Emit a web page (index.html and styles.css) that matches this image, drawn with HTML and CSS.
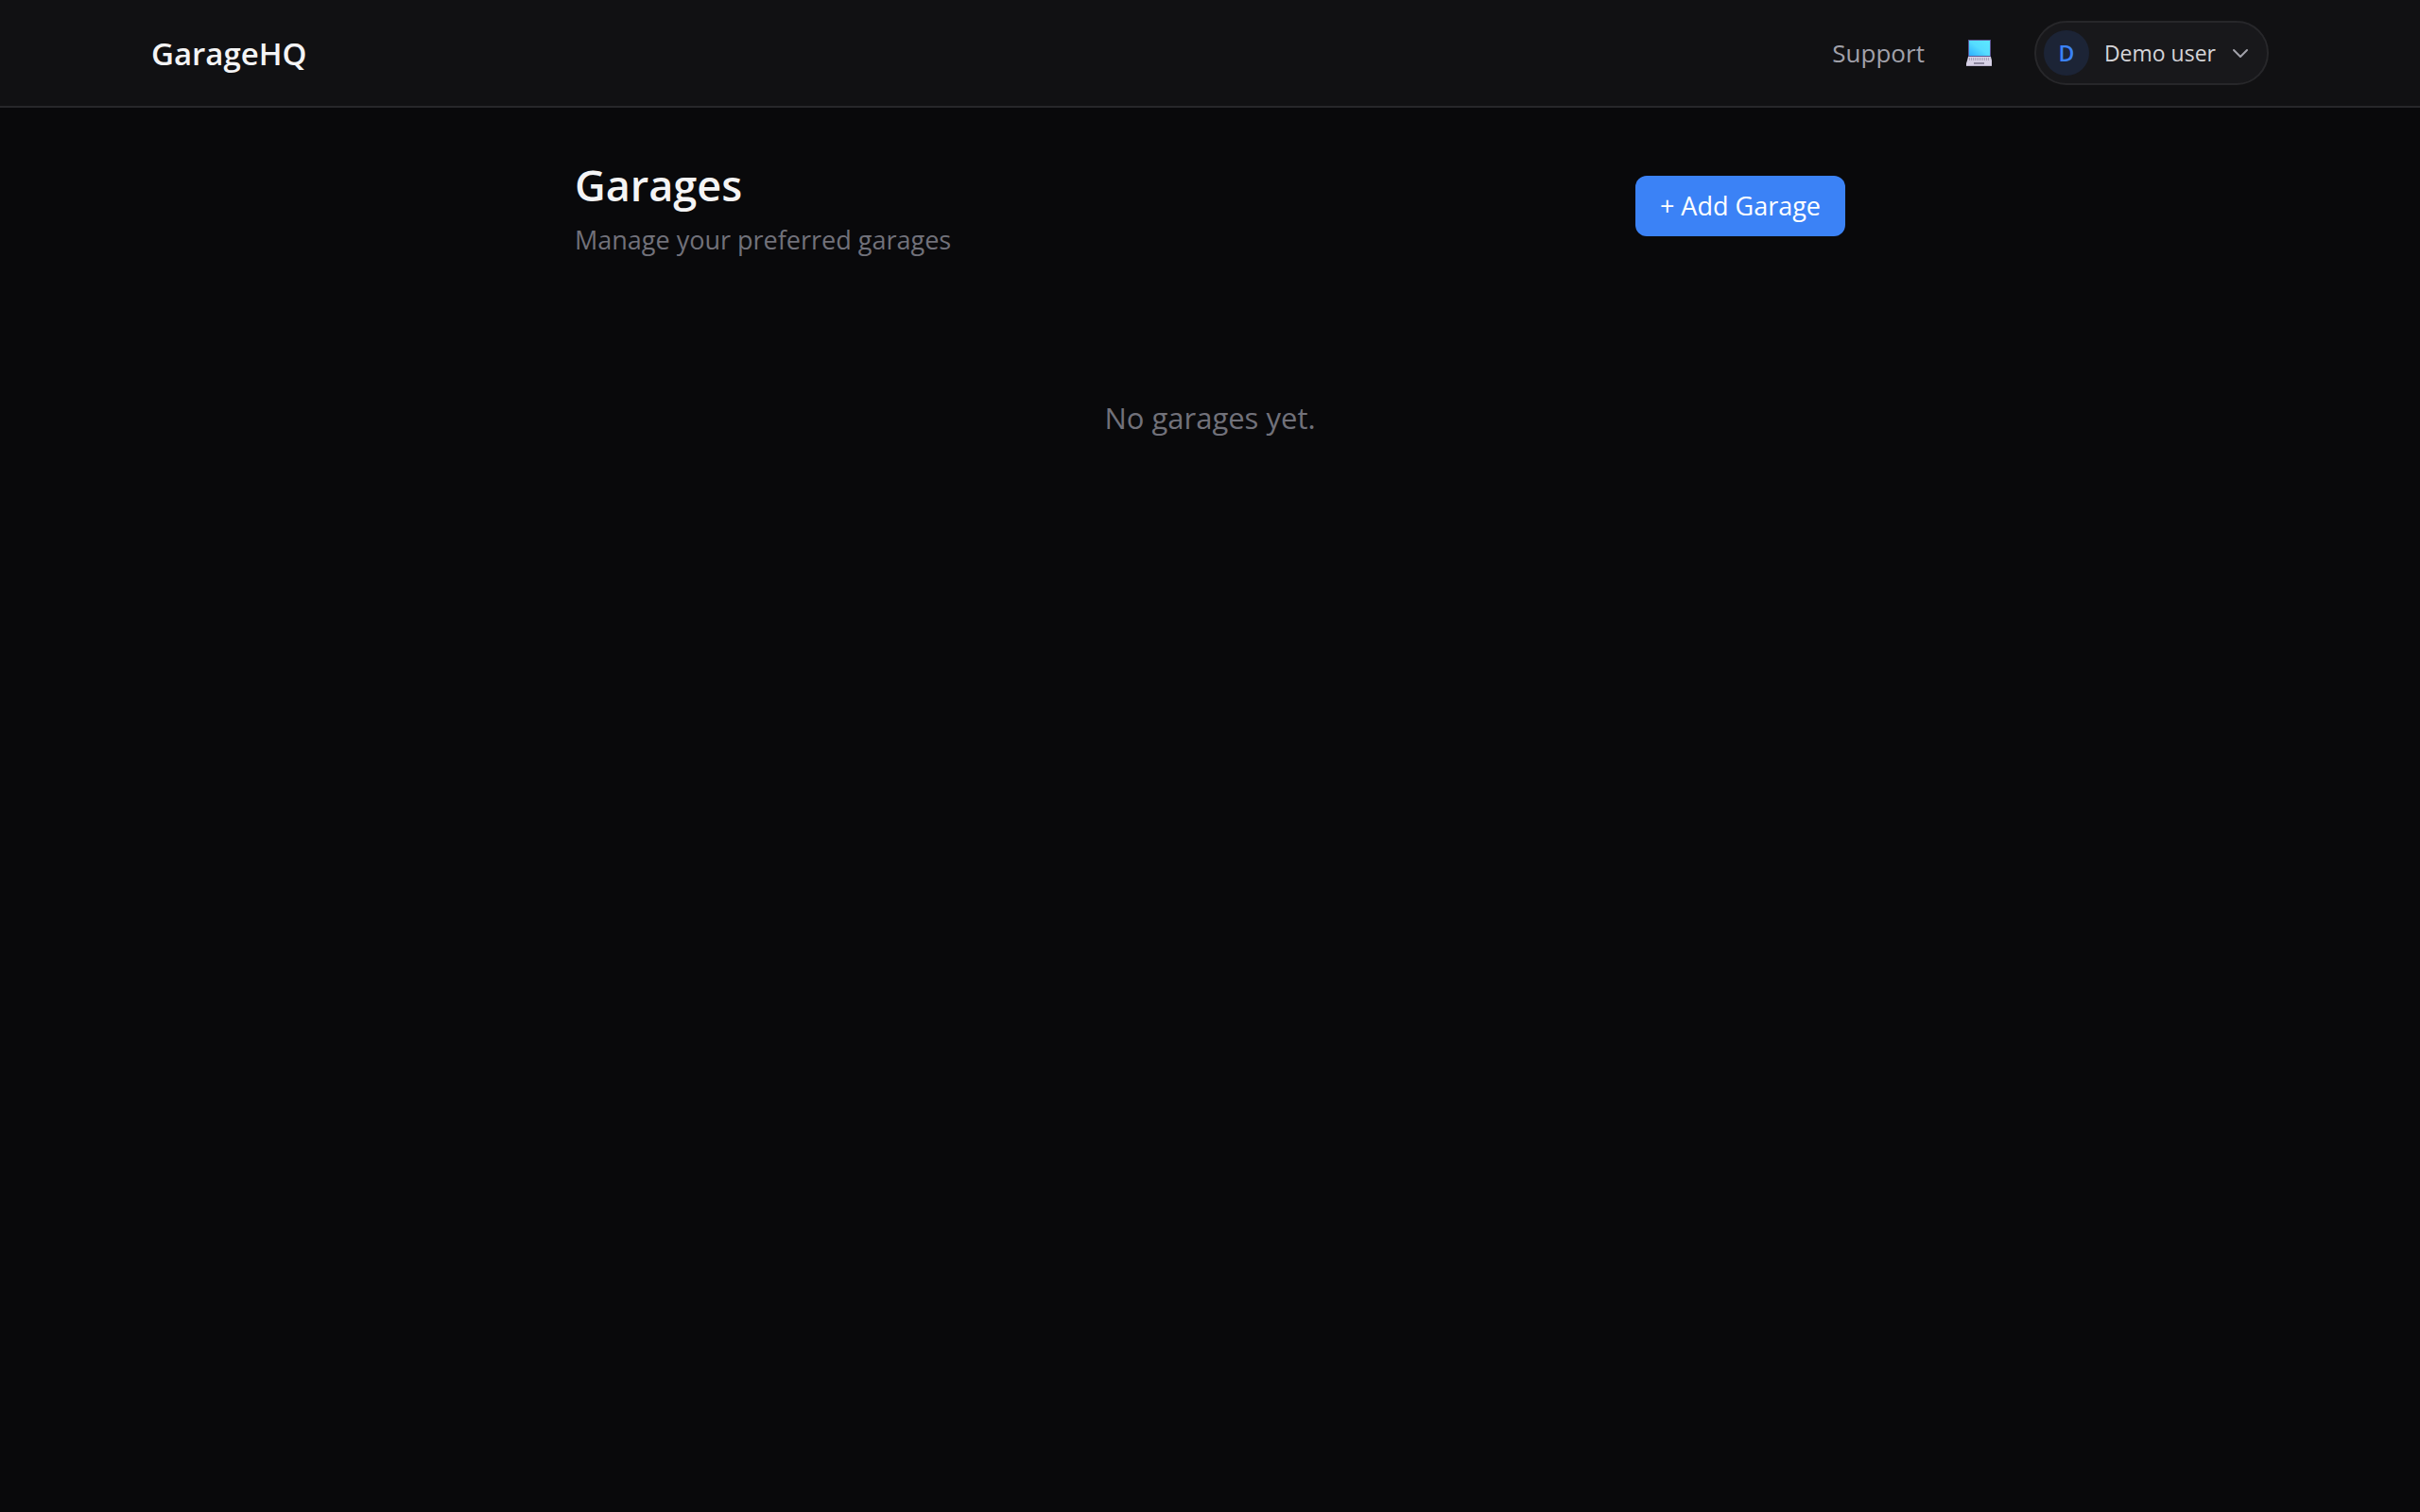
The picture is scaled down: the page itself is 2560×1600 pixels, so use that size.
FILE: index.html
```html
<!DOCTYPE html>
<html lang="en">
<head>
  <meta charset="utf-8">
  <meta name="viewport" content="width=device-width, initial-scale=1">
  <title>Garages - GarageHQ</title>
  <link rel="stylesheet" href="styles.css">
</head>
<body>
  <header class="topbar">
    <div class="topbar-inner">
      <a class="brand" href="#">GarageHQ</a>
      <nav class="topbar-nav">
        <a class="nav-link" href="#">Support</a>
        <button class="theme-button" type="button" aria-label="Change theme">
          <svg class="laptop" viewBox="0 0 28 28" aria-hidden="true">
            <defs>
              <linearGradient id="screen" x1="0" y1="1" x2="1" y2="0">
                <stop offset="0" stop-color="#2eaeff"/>
                <stop offset=".5" stop-color="#56dcff"/>
                <stop offset="1" stop-color="#5ce8ff"/>
              </linearGradient>
            </defs>
            <path fill="#5c5795" d="M2 0h24v18H2z"/>
            <path fill="url(#screen)" d="M3 1h22v16H3z"/>
            <path fill="#d7d1e6" d="M2 18h24l1 4v6H0v-3l1-3z"/>
            <path fill="none" stroke="#aaa5ba" stroke-width="3" stroke-dasharray="1 1" d="M3 20.500h22"/>
            <path fill="#8d879f" d="M8 24h11v2H8z"/>
            <path fill="#b8b2c9" d="M0 27h27v1H0z"/>
          </svg>
        </button>
        <button class="user-menu" type="button" aria-haspopup="menu">
          <span class="avatar">D</span>
          <span class="user-name">Demo user</span>
          <svg class="chevron" viewBox="0 0 20 20" aria-hidden="true">
            <path d="m3 7 7 7 7-7"/>
          </svg>
        </button>
      </nav>
    </div>
  </header>
  <main class="page">
    <div class="page-header">
      <div class="page-heading">
        <h1 class="page-title">Garages</h1>
        <p class="page-subtitle">Manage your preferred garages</p>
      </div>
      <button class="primary-button" type="button">+ Add Garage</button>
    </div>
    <p class="empty-state">No garages yet.</p>
  </main>
</body>
</html>
```

FILE: styles.css
```css
*,
*::before,
*::after {
  box-sizing: border-box;
}

body {
  margin: 0;
  min-height: 100vh;
  background: #09090b;
  color: #f4f4f5;
  font-family: "Segoe UI", "Open Sans", sans-serif;
  font-size: 27px;
}

button {
  margin: 0;
  border: 0;
  font-family: inherit;
  cursor: pointer;
}

.topbar {
  background: #111113;
  border-bottom: 2px solid #27272a;
}

.topbar-inner {
  display: flex;
  align-items: center;
  justify-content: space-between;
  max-width: 2304px;
  min-height: 112px;
  margin: 0 auto;
  padding: 0 32px;
}

.brand {
  color: #f4f4f5;
  font-size: 33px;
  font-weight: 600;
  text-decoration: none;
}

.topbar-nav {
  display: flex;
  align-items: center;
  gap: 44px;
}

.nav-link {
  color: #a1a1aa;
  font-size: 26px;
  text-decoration: none;
}

.theme-button {
  display: flex;
  padding: 0;
  background: none;
}

.laptop {
  width: 28px;
  height: 28px;
}

.user-menu {
  display: flex;
  align-items: center;
  gap: 16px;
  padding: 8px 18px 8px 8px;
  border: 2px solid #27272a;
  border-radius: 34px;
  background: #18181b;
  color: #d4d4d8;
  font-size: 23px;
}

.avatar {
  display: grid;
  place-items: center;
  width: 48px;
  height: 48px;
  border-radius: 50%;
  background: #1c2436;
  color: #3b82f6;
  font-weight: 600;
}

.chevron {
  width: 20px;
  height: 20px;
  fill: none;
  stroke: #a1a1aa;
  stroke-width: 2;
  stroke-linecap: round;
  stroke-linejoin: round;
}

.page {
  max-width: 1408px;
  margin: 0 auto;
  padding: 48px 32px;
}

.page-header {
  display: flex;
  align-items: center;
  justify-content: space-between;
  margin-bottom: 48px;
}

.page-title {
  margin: 0 0 4px;
  font-size: 45px;
  font-weight: 600;
  line-height: 68px;
}

.page-subtitle {
  margin: 0;
  color: #71717a;
  line-height: 40px;
}

.primary-button {
  padding: 12px 26px;
  border-radius: 12px;
  background: #3b82f6;
  color: #fff;
  font-size: 27px;
  line-height: 40px;
}

.empty-state {
  margin: 0;
  padding: 96px 0;
  color: #71717a;
  font-size: 31px;
  line-height: 48px;
  text-align: center;
}
```
